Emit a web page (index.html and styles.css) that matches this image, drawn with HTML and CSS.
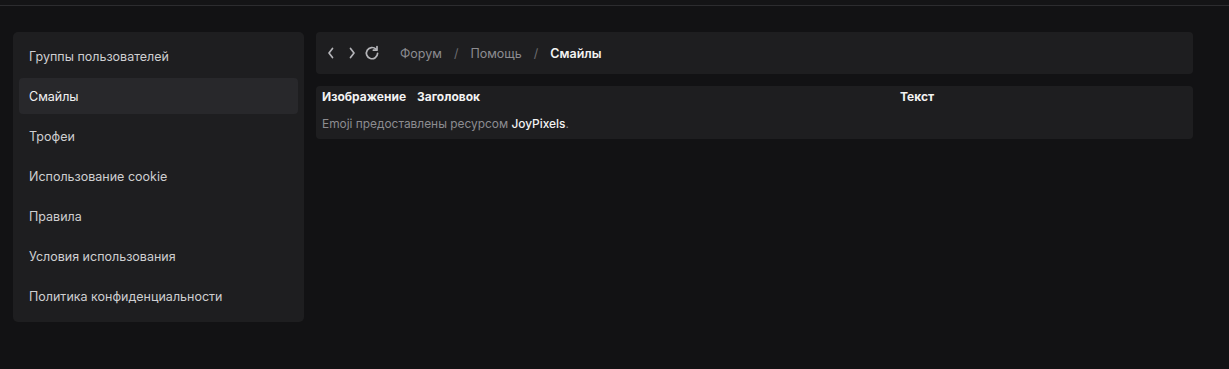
FILE: index.html
```html
<!DOCTYPE html>
<html lang="ru">
<head>
    <meta charset="UTF-8">
    <title>Смайлы</title>
    <link rel="stylesheet" href="styles.css">
</head>
<body>
    <div class="topbar"></div>

    <div class="layout">
        <nav class="sidebar">
            <a class="side-item" href="#">Группы пользователей</a>
            <a class="side-item active" href="#">Смайлы</a>
            <a class="side-item" href="#">Трофеи</a>
            <a class="side-item" href="#">Использование cookie</a>
            <a class="side-item" href="#">Правила</a>
            <a class="side-item" href="#">Условия использования</a>
            <a class="side-item" href="#">Политика конфиденциальности</a>
        </nav>

        <main class="content">
            <div class="card crumbs">
                <div class="nav-buttons">
                    <svg class="icon" width="10" height="14" viewBox="0 0 10 14"><path d="M6.5 2.5 L3 7 L6.5 11.5" /></svg>
                    <svg class="icon" width="10" height="14" viewBox="0 0 10 14"><path d="M3.5 2.5 L7 7 L3.5 11.5" /></svg>
                    <svg class="icon refresh" width="16" height="16" viewBox="0 0 16 16"><path d="M13.6 8.4 A5.6 5.6 0 1 1 12 4.2" /><path d="M13 1.6 V5.2 H9.4" /></svg>
                </div>
                <a class="crumb" href="#">Форум</a>
                <span class="sep">/</span>
                <a class="crumb" href="#">Помощь</a>
                <span class="sep">/</span>
                <span class="crumb current">Смайлы</span>
            </div>

            <div class="card smilies">
                <div class="smilies-head">
                    <span>Изображение</span>
                    <span>Заголовок</span>
                    <span>Текст</span>
                </div>
                <p class="credit">Emoji предоставлены ресурсом <a href="#">JoyPixels</a>.</p>
            </div>
        </main>
    </div>
</body>
</html>
```

FILE: styles.css
```css
:root {
    --bg: #121214;
    --card: #1e1e20;
    --card-active: #28282b;
    --line: #2c2c2f;
    --text: #d4d4d6;
    --text-muted: #8c8c90;
    --white: #f2f2f2;
}

body {
    margin: 0;
    background: var(--bg);
    font-family: Inter, "Noto Sans", sans-serif;
    font-size: 12.5px;
    color: var(--text);
}

a {
    color: inherit;
    text-decoration: none;
}

.topbar {
    height: 5px;
    background: #141416;
    border-bottom: 1px solid var(--line);
}

.layout {
    display: flex;
    gap: 12px;
    padding: 26px 36px 0 13px;
    align-items: flex-start;
}

.sidebar {
    width: 279px;
    flex-shrink: 0;
    background: var(--card);
    border-radius: 5px;
    padding: 6px 6px 8px;
    display: flex;
    flex-direction: column;
    gap: 4px;
}

.side-item {
    height: 36px;
    display: flex;
    align-items: center;
    padding: 0 10px;
    border-radius: 4px;
    color: #cfcfd1;
}

.side-item.active {
    background: var(--card-active);
    color: var(--white);
}

.content {
    flex: 1;
    display: flex;
    flex-direction: column;
    gap: 12px;
}

.card {
    background: var(--card);
    border-radius: 4px;
}

.crumbs {
    height: 42px;
    display: flex;
    align-items: center;
    padding: 0 10px;
}

.nav-buttons {
    display: flex;
    align-items: center;
    gap: 11px;
    margin-right: 20px;
}

.nav-buttons .refresh {
    margin-left: -4px;
}

.icon {
    fill: none;
    stroke: #b4b4b8;
    stroke-width: 1.7;
    stroke-linecap: round;
    stroke-linejoin: round;
}

.crumb {
    color: var(--text-muted);
}

.crumb.current {
    color: var(--white);
    font-weight: 600;
}

.sep {
    color: #6c6c70;
    margin: 0 12px;
}

.smilies {
    padding: 3px 6px 7px;
}

.smilies-head {
    display: grid;
    grid-template-columns: 95px 483px 1fr;
    font-size: 12px;
    font-weight: 700;
    color: var(--white);
    line-height: 16px;
}

.credit {
    margin: 11px 0 0;
    font-size: 11.9px;
    color: var(--text-muted);
    line-height: 16px;
}

.credit a {
    color: var(--white);
    font-weight: 500;
}
```
